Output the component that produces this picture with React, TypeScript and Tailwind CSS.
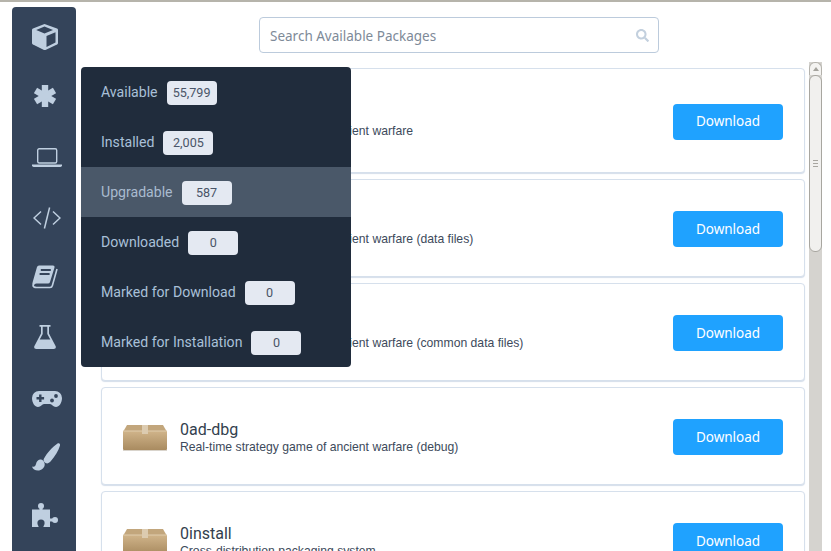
import { FaSearch } from "react-icons/fa";

const sans = "font-['Roboto',sans-serif]";

const menu = [
  { label: "Available", count: "55,799" },
  { label: "Installed", count: "2,005" },
  { label: "Upgradable", count: "587", active: true },
  { label: "Downloaded", count: "0" },
  { label: "Marked for Download", count: "0" },
  { label: "Marked for Installation", count: "0" },
];

const packages = [
  { name: "0ad", desc: "Real-time strategy game of ancient warfare", h: "h-[105px]" },
  { name: "0ad-data", desc: "Real-time strategy game of ancient warfare (data files)", h: "h-[98px]" },
  { name: "0ad-data-common", desc: "Real-time strategy game of ancient warfare (common data files)", h: "h-[98px]" },
  { name: "0ad-dbg", desc: "Real-time strategy game of ancient warfare (debug)", h: "h-[98px]" },
  { name: "0install", desc: "Cross-distribution packaging system", h: "h-[98px]" },
];

const light = "#bfcfe0";
const dark = "#34445a";

function Cube() {
  return (
    <svg width="26" height="26" viewBox="0 0 26 26" className="block">
      <path d="M12.500 0 25 4.500q1 .4 1 1.500v13q0 1-1 1.500L13.500 26h-1.500L1 20.500q-1-.5-1-1.500V6q0-1.100 1-1.500z" fill={light} />
      <path d="M12.500 2.600 21 6l-8.500 3.400L4.200 6z" fill={dark} />
      <path d="M14.500 12 23.500 8.200v10.300L14.500 23z" fill={dark} />
    </svg>
  );
}

function Asterisk() {
  return (
    <svg width="22" height="22" viewBox="0 0 22 22" className="block" stroke={light} strokeWidth="6.4">
      <path d="M11 0v22" />
      <path d="M1.500 5.500 20.500 16.500" />
      <path d="M20.500 5.500 1.500 16.500" />
    </svg>
  );
}

function Laptop() {
  return (
    <svg width="30" height="19" viewBox="0 0 30 19" fill="none" className="block">
      <rect x="5.700" y=".7" width="19" height="14.300" rx="1.500" stroke={light} strokeWidth="1.400" />
      <path d="M0 16.500h30v.8A1.700 1.700 0 0 1 28.300 19H1.700A1.700 1.700 0 0 1 0 17.300z" fill={light} />
    </svg>
  );
}

function Code() {
  return (
    <svg width="28" height="22" viewBox="0 0 28 22" fill="none" stroke={light} strokeWidth="1.500" className="block">
      <path d="M8 4.500 1 11l7 6.500" />
      <path d="M20 4.500 27 11l-7 6.500" />
      <path d="M16.600 .5 11.400 21.500" />
    </svg>
  );
}

function Book() {
  return (
    <svg width="26" height="24" viewBox="0 0 26 24" className="block">
      <path d="M7 .5h14q2 0 1.500 2L18 17q-.4 1.500-2 1.500H4.500Q2 18.500 2 21H.5q-.5-2 .2-4L5 2Q5.500.5 7 .5z" fill={light} />
      <path d="M25 4l-4.600 16.500q-.5 2-2.400 2H4.500Q1.500 22.500.8 20.500" fill="none" stroke={light} strokeWidth="1.600" />
      <path d="M8.800 5h10M7.600 9h10" stroke={dark} strokeWidth="1.800" />
    </svg>
  );
}

function Flask() {
  return (
    <svg width="22" height="24" viewBox="0 0 22 24" className="block">
      <path d="M5.500 0h11v1.800H15v6.700l6.700 12.700q.8 2.800-2 2.800H2.300q-2.800 0-2-2.800L7 8.500V1.800H5.500z" fill={light} />
      <path d="M8.700 1.800v7.100L5.700 14.500h10.600L13.300 8.900V1.800z" fill={dark} />
    </svg>
  );
}

function Gamepad() {
  return (
    <svg width="30" height="16" viewBox="0 0 30 16" className="block">
      <path d="M7 0h16a7 7 0 0 1 7 7c0 5-3 9-6 9-3 0-4-3-6-3h-6c-2 0-3 3-6 3-3 0-6-4-6-9a7 7 0 0 1 7-7z" fill={light} />
      <path d="M8.300 3.500v7.500M4.500 7.200h7.600" stroke={dark} strokeWidth="2.400" />
      <circle cx="20" cy="9.500" r="1.900" fill={dark} />
      <circle cx="24" cy="5" r="1.900" fill={dark} />
    </svg>
  );
}

function Brush() {
  return (
    <svg width="28" height="28" viewBox="0 0 28 28" className="block" fill={light}>
      <path d="M25.500.5c1.500-1 3 .5 2.500 2-1.500 5-5 11-9.500 16-1.500 1.500-3 2.500-5 1.500-1.500-1-2.500-2.500-1.500-4.500C15 10 20.500 4 25.500.5z" />
      <path d="M8 16.500c2-.5 4.500 1.500 4.700 4.500.2 4-3.500 6.500-6.700 6.500C3 27.500.7 26 0 23.500c2.500 1 3.500-.5 4-2.500.5-2.500 2-4 4-4.500z" />
    </svg>
  );
}

function Puzzle() {
  return (
    <svg width="26" height="24" viewBox="0 0 26 24" className="block" fill={light}>
      <rect x="0" y="6.500" width="18" height="17.500" />
      <rect x="7.500" y="4" width="3" height="4" />
      <circle cx="9" cy="3" r="3" />
      <rect x="17" y="15.500" width="5" height="3" />
      <circle cx="23" cy="17" r="3" />
      <circle cx="9" cy="20" r="3.600" fill={dark} />
      <rect x="6.500" y="20" width="5" height="4" fill={dark} />
    </svg>
  );
}

function BoxIcon() {
  return (
    <svg width="45" height="27" viewBox="1 0 45 27" className="mt-[2px] shrink-0">
      <defs>
        <linearGradient id="boxFront" x1="0" y1="0" x2="0" y2="1">
          <stop offset="0" stopColor="#d0b48a" />
          <stop offset="1" stopColor="#a98b60" />
        </linearGradient>
      </defs>
      <path d="M5 1h36l4 7H1z" fill="#c2a67c" />
      <path d="M1 7h44v18a1 1 0 0 1-1 1H2a1 1 0 0 1-1-1z" fill="url(#boxFront)" />
      <path d="M1 7h44" stroke="#e0cdae" strokeWidth="1" />
      <rect x="20" y="1" width="6" height="9" fill="#dccbb0" />
      <path d="M1 26.500h44" stroke="#d9d4cc" strokeWidth="1" />
    </svg>
  );
}

export default function App() {
  return (
    <div className={`relative h-[551px] w-[831px] overflow-hidden bg-white border-t-2 border-[#b6b4ab] ${sans}`}>
      <div className="flex h-full items-stretch pl-3 pt-[5px]">
        {/* sidebar */}
        <div className="flex w-16 shrink-0 flex-col items-start rounded-t-sm bg-[#34445a] pl-5 pt-[17px]">
          <Cube />
          <div className="ml-[2px] mt-[35px]"><Asterisk /></div>
          <div className="mt-[41px]"><Laptop /></div>
          <div className="ml-px mt-[40px]"><Code /></div>
          <div className="mt-[36px]"><Book /></div>
          <div className="ml-[2px] mt-[36px]"><Flask /></div>
          <div className="mt-[42px]"><Gamepad /></div>
          <div className="mt-[36px]"><Brush /></div>
          <div className="mt-[32px]"><Puzzle /></div>
        </div>

        {/* main column */}
        <div className="flex min-w-0 flex-1 flex-col">
          <div className="flex justify-center pl-[11px] pt-[10px]">
            <div className="flex h-9 w-[400px] items-center justify-between rounded border border-[#bccbdc] pl-[10px] pr-[9px]">
              <span className="pt-[2px] font-['Noto_Sans',sans-serif] text-[13.5px] text-[#7e8a98]">Search Available Packages</span>
              <FaSearch size={13} className="text-[#c3d0de]" />
            </div>
          </div>

          <div className="flex flex-1 gap-1 pl-[25px] pt-[15px]">
            <div className="flex w-[704px] shrink-0 flex-col gap-[6px]">
              {packages.map((p) => (
                <div
                  key={p.name}
                  className={`flex ${p.h} shrink-0 items-center justify-between rounded border border-[#d6e0ec] bg-white pl-[21px] pr-[21px] shadow-[0_1px_1px_#d5deea]`}
                >
                  <div className="flex items-center gap-[12px]">
                    <BoxIcon />
                    <div className="flex flex-col pt-[2px]">
                      <span className="text-base leading-[20px] text-[#333f4e]">{p.name}</span>
                      <span className="font-['Liberation_Sans',sans-serif] text-[12.2px] leading-[15px] text-[#3d4a5b]">{p.desc}</span>
                    </div>
                  </div>
                  <button className="mt-[2px] h-9 w-[110px] rounded bg-[#1fa2ff] font-['Noto_Sans',sans-serif] text-[13.5px] text-white">
                    Download
                  </button>
                </div>
              ))}
            </div>

            {/* scrollbar */}
            <div className="-mt-[6px] flex w-[13px] shrink-0 flex-col bg-[#d5d3cf]">
              <div className="flex h-[13px] shrink-0 items-center justify-center rounded-t-md border border-b-0 border-[#b4b2ac] bg-[#f4f3f1]">
                <div className="h-0 w-0 border-x-[3px] border-b-[4px] border-x-transparent border-b-[#a5a39d]" />
              </div>
              <div className="flex h-[177px] shrink-0 flex-col items-center justify-center gap-[2px] rounded-md border border-[#a8a6a0] bg-[#f1f0ee]">
                <div className="h-px w-[5px] bg-[#a8a6a0]" />
                <div className="h-px w-[5px] bg-[#a8a6a0]" />
                <div className="h-px w-[5px] bg-[#a8a6a0]" />
              </div>
            </div>
          </div>
        </div>
      </div>

      {/* dropdown over the list */}
      <div className="absolute left-[81px] top-[65px] w-[270px] overflow-hidden rounded-sm bg-[#202c3c]">
        {menu.map((m) => (
          <div
            key={m.label}
            className={`flex h-[50px] items-center gap-[9px] pl-5 text-[14.1px] ${m.active ? "bg-[#4a5869] text-[#a9bbcf]" : "text-[#a9c0d8]"}`}
          >
            <span className="pt-[2px]">{m.label}</span>
            <span className="mt-[2px] flex h-6 w-[50px] items-center justify-center rounded bg-[#e4e9f2] text-[12.6px] text-[#4a5568]">
              {m.count}
            </span>
          </div>
        ))}
      </div>
    </div>
  );
}
